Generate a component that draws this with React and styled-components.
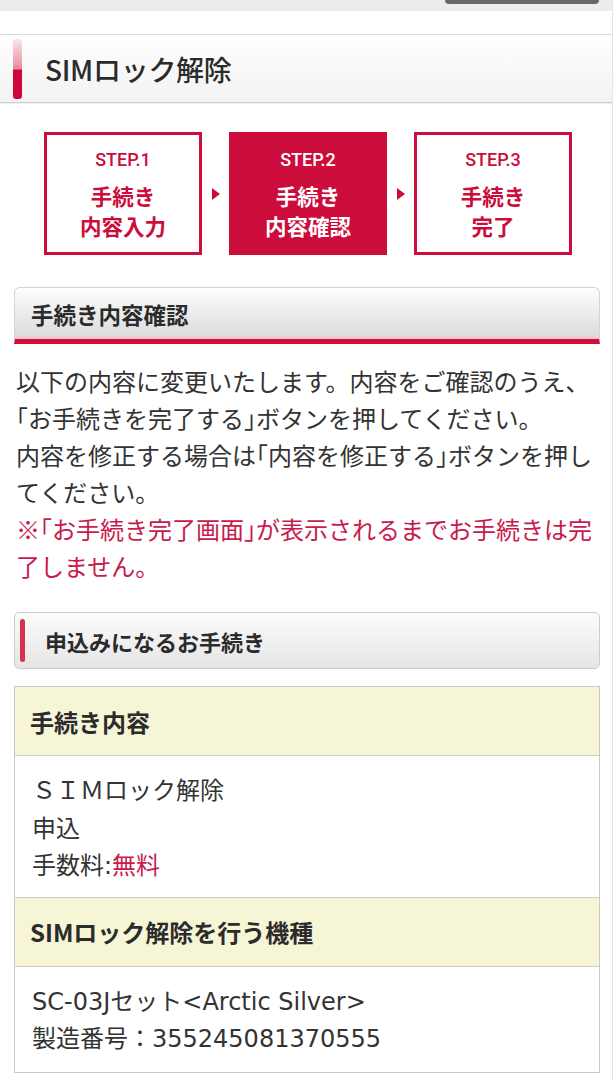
import React from "react";
import styled, { createGlobalStyle } from "styled-components";

const GlobalStyle = createGlobalStyle`
  body {
    margin: 0;
    background: #fff;
    font-family: "Noto Sans CJK JP", "Noto Sans", sans-serif;
    color: #333;
  }
`;

const RED = "#cc0c3a";

const Page = styled.div`
  width: 613px;
  border-right: 1px solid #e4e4e4;
  min-height: 1080px;
  box-sizing: border-box;
  overflow: hidden;
`;

const TopStrip = styled.div`
  height: 11px;
  background: #ececec;
  display: flex;
  justify-content: flex-end;
  align-items: flex-start;
  padding-right: 13px;
`;

const MenuButton = styled.div`
  width: 154px;
  height: 4px;
  background: #676767;
  border-radius: 0 0 6px 6px;
`;

const Spacer = styled.div`
  height: 23px;
  border-bottom: 1px solid #dcdcdc;
`;

const TitleBar = styled.div`
  height: 67px;
  display: flex;
  align-items: center;
  gap: 23px;
  padding-left: 13px;
  background: linear-gradient(#ffffff, #f2f2f2);
  border-bottom: 1px solid #cfcfcf;
  box-shadow: 0 1px 1px rgba(0, 0, 0, 0.06);
`;

const TitleMark = styled.span`
  width: 9px;
  height: 60px;
  border-radius: 3px;
  background: linear-gradient(#fbe6eb 0%, #e8899e 50%, #d0073a 52%, #d0073a 100%);
`;

const Title = styled.h1`
  margin: 0;
  font-size: 28px;
  font-weight: 500;
  color: #2b2b2b;
  letter-spacing: -0.3px;
`;

const Content = styled.div`
  padding: 0 12px 0 14px;
`;

const Steps = styled.div`
  display: flex;
  justify-content: center;
  align-items: center;
  margin: 29px 0 32px;
  padding-left: 2px;
`;

const StepBox = styled.div`
  width: 158px;
  height: 123px;
  box-sizing: border-box;
  border: 3px solid ${RED};
  background: ${({ $active }) => ($active ? RED : "#fff")};
  color: ${({ $active }) => ($active ? "#fff" : RED)};
  display: flex;
  flex-direction: column;
  align-items: center;
  padding-top: 13px;
`;

const StepNo = styled.div`
  font-family: Roboto, "Liberation Sans", sans-serif;
  font-size: 18px;
  font-weight: 500;
  line-height: 24px;
  margin-bottom: 9px;
`;

const StepLabel = styled.div`
  font-size: 21.5px;
  font-weight: 700;
  line-height: 30px;
  text-align: center;
`;

const Arrow = styled.span`
  width: 27px;
  display: flex;
  justify-content: center;
  &::before {
    content: "";
    border-left: 8px solid ${RED};
    border-top: 6px solid transparent;
    border-bottom: 6px solid transparent;
  }
`;

const SectionHead = styled.h2`
  margin: 0;
  height: 51px;
  display: flex;
  align-items: center;
  padding-left: 16px;
  font-size: 22.5px;
  font-weight: 700;
  color: #2b2b2b;
  border: 1px solid #d4d4d4;
  border-bottom: 5px solid #d10f3c;
  border-radius: 6px 6px 0 0;
  background: linear-gradient(#fdfdfd, #dadada);
  box-shadow: inset 0 -2px 0 #f3c3cf;
`;

const Lead = styled.p`
  margin: 18px 0 0 2px;
  font-size: 24px;
  line-height: 37px;
  white-space: nowrap;
  color: #333;
`;

const Warn = styled.span`
  color: #c81a4b;
`;

const Q = styled.span`
  font-feature-settings: "halt";
`;

const SubHead = styled.h3`
  margin: 28px 0 0;
  height: 55px;
  display: flex;
  align-items: center;
  gap: 20px;
  padding-left: 5px;
  font-size: 22px;
  font-weight: 700;
  color: #2b2b2b;
  border: 1px solid #cdcdcd;
  border-radius: 5px;
  background: linear-gradient(#fcfcfc, #e5e5e5);
`;

const SubMark = styled.span`
  width: 5px;
  height: 43px;
  border-radius: 3px;
  background: #d3344f;
`;

const Table = styled.div`
  margin-top: 17px;
  border: 1px solid #c9c9c9;
`;

const RowHead = styled.div`
  height: 68px;
  display: flex;
  align-items: center;
  padding-left: 15px;
  background: #f6f5d6;
  border-bottom: 1px solid #cccccc;
  font-size: 24px;
  font-weight: 700;
  color: #2b2b2b;
`;

const RowBody = styled.div`
  padding: ${({ $pad }) => $pad};
  padding-left: 17px;
  font-family: "DejaVu Sans", "Noto Sans CJK JP", sans-serif;
  font-size: 24px;
  line-height: 37.5px;
  color: #333;
  & + ${RowHead} {
    border-top: 1px solid #cccccc;
  }
`;

const Free = styled.span`
  color: #c81a4b;
`;

const steps = [
  { no: "STEP.1", label: ["手続き", "内容入力"] },
  { no: "STEP.2", label: ["手続き", "内容確認"], active: true },
  { no: "STEP.3", label: ["手続き", "完了"] },
];

export default function App() {
  return (
    <Page>
      <GlobalStyle />
      <TopStrip>
        <MenuButton />
      </TopStrip>
      <Spacer />
      <TitleBar>
        <TitleMark />
        <Title>SIMロック解除</Title>
      </TitleBar>
      <Content>
        <Steps>
          {steps.map((s, i) => (
            <React.Fragment key={s.no}>
              {i > 0 && <Arrow />}
              <StepBox $active={s.active}>
                <StepNo>{s.no}</StepNo>
                <StepLabel>
                  {s.label[0]}
                  <br />
                  {s.label[1]}
                </StepLabel>
              </StepBox>
            </React.Fragment>
          ))}
        </Steps>
        <SectionHead>手続き内容確認</SectionHead>
        <Lead>
          以下の内容に変更いたします。内容をご確認のうえ、
          <br />
          <Q>「</Q>お手続きを完了する<Q>」</Q>ボタンを押してください。
          <br />
          内容を修正する場合は<Q>「</Q>内容を修正する<Q>」</Q>ボタンを押し
          <br />
          てください。
          <br />
          <Warn>
            ※<Q>「</Q>お手続き完了画面<Q>」</Q>が表示されるまでお手続きは完
            <br />
            了しません。
          </Warn>
        </Lead>
        <SubHead>
          <SubMark />
          申込みになるお手続き
        </SubHead>
        <Table>
          <RowHead>手続き内容</RowHead>
          <RowBody $pad="17px 0 11px">
            ＳＩＭロック解除
            <br />
            申込
            <br />
            手数料:<Free>無料</Free>
          </RowBody>
          <RowHead>SIMロック解除を行う機種</RowHead>
          <RowBody $pad="17px 0 13px">
            SC-03Jセット&lt;Arctic Silver&gt;
            <br />
            製造番号：355245081370555
          </RowBody>
        </Table>
      </Content>
    </Page>
  );
}
